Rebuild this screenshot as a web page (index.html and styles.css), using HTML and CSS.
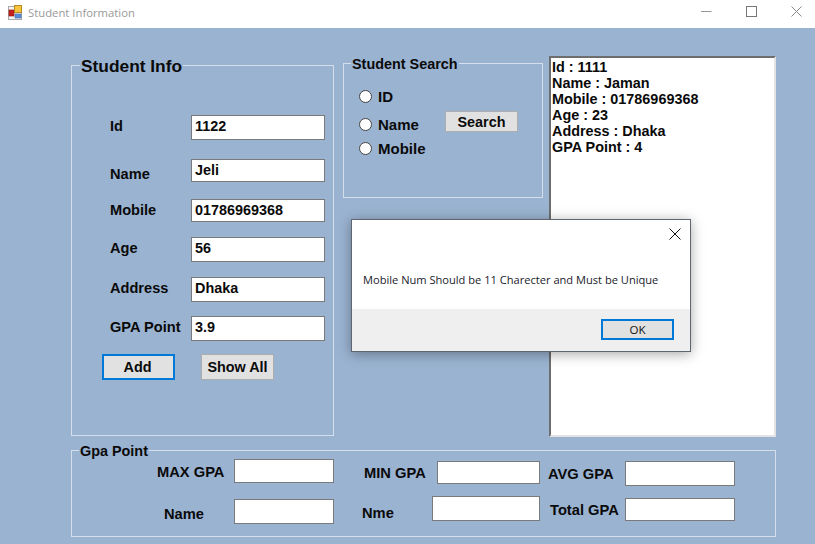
FILE: index.html
```html
<!DOCTYPE html>
<html lang="en">
<head>
    <meta charset="UTF-8">
    <title>Student Information</title>
    <link rel="stylesheet" href="styles.css">
</head>
<body>
    <!-- Title bar -->
    <div class="titlebar">
        <svg class="app-icon" width="15" height="15" viewBox="0 0 15 15">
            <rect x="0.5" y="1.5" width="13" height="13" fill="#f4f4f4" stroke="#a8a8a8"/>
            <rect x="1" y="5" width="5" height="6" fill="#c8201c" stroke="#8a1512" stroke-width="0.6"/>
            <rect x="6.5" y="0.5" width="7" height="7" fill="#f6c33c" stroke="#b78a22"/>
            <rect x="7" y="9" width="6" height="4" fill="#5a8fd8" stroke="#3f6db0" stroke-width="0.6"/>
        </svg>
        <span class="title-text">Student Information</span>
        <div class="window-btns">
            <svg width="11" height="11" viewBox="0 0 11 11"><path d="M0 5.5H10.5" stroke="#999" fill="none"/></svg>
            <svg width="11" height="11" viewBox="0 0 11 11"><rect x="0.5" y="0.5" width="10" height="10" stroke="#777" fill="none"/></svg>
            <svg width="11" height="11" viewBox="0 0 11 11"><path d="M0.5 0.5L10.5 10.5M10.5 0.5L0.5 10.5" stroke="#888" fill="none"/></svg>
        </div>
    </div>

    <!-- Form -->
    <div class="form">
        <div class="top-row">
            <fieldset class="group group-info">
                <legend class="legend-big">Student Info</legend>
                <div class="field field-id"><label>Id</label><input type="text" value="1122"></div>
                <div class="field field-name"><label class="label-low">Name</label><input type="text" value="Jeli"></div>
                <div class="field field-mobile"><label>Mobile</label><input type="text" value="01786969368"></div>
                <div class="field field-age"><label>Age</label><input type="text" value="56"></div>
                <div class="field field-address"><label>Address</label><input type="text" value="Dhaka"></div>
                <div class="field field-gpa"><label>GPA Point</label><input type="text" value="3.9"></div>
                <div class="btn-row">
                    <button class="btn btn-focus">Add</button>
                    <button class="btn">Show All</button>
                </div>
            </fieldset>

            <fieldset class="group group-search">
                <legend>Student Search</legend>
                <div class="search-body">
                    <div class="radios">
                        <label class="radio radio-id"><input type="radio" name="by">ID</label>
                        <label class="radio radio-name"><input type="radio" name="by">Name</label>
                        <label class="radio radio-mobile"><input type="radio" name="by">Mobile</label>
                    </div>
                    <button class="btn btn-search">Search</button>
                </div>
            </fieldset>

            <div class="output">
                <div>Id : 1111</div>
                <div>Name : Jaman</div>
                <div>Mobile : 01786969368</div>
                <div>Age : 23</div>
                <div>Address : Dhaka</div>
                <div>GPA Point : 4</div>
            </div>
        </div>

        <fieldset class="group group-gpa">
            <legend>Gpa Point</legend>
            <div class="gpa-cols">
                <div class="gpa-col col-max">
                    <div class="gpa-item item-max"><label>MAX GPA</label><input type="text"></div>
                    <div class="gpa-item item-name"><label>Name</label><input type="text"></div>
                </div>
                <div class="gpa-col col-min">
                    <div class="gpa-item item-min"><label>MIN GPA</label><input type="text"></div>
                    <div class="gpa-item item-nme"><label>Nme</label><input type="text"></div>
                </div>
                <div class="gpa-col col-avg">
                    <div class="gpa-item item-avg"><label>AVG GPA</label><input type="text"></div>
                    <div class="gpa-item item-total"><label>Total GPA</label><input type="text"></div>
                </div>
            </div>
        </fieldset>
    </div>

    <!-- Message box -->
    <div class="dialog">
        <div class="dialog-body">
            <svg class="dialog-close" width="12" height="12" viewBox="0 0 12 12"><path d="M0.5 0.5L11.5 11.5M11.5 0.5L0.5 11.5" stroke="#111" fill="none"/></svg>
            <p>Mobile Num Should be 11 Charecter and Must be Unique</p>
        </div>
        <div class="dialog-footer">
            <button class="btn-ok">OK</button>
        </div>
    </div>
</body>
</html>
```

FILE: styles.css
```css
/* General Reset */
* {
    margin: 0;
    padding: 0;
    box-sizing: border-box;
}

body {
    width: 815px;
    height: 544px;
    overflow: hidden;
    position: relative;
    font-family: "Liberation Sans", Arial, sans-serif;
    font-size: 14.4px;
    font-weight: bold;
    color: #0a0a0a;
    background-color: #9ab3d1;
}

/* Title bar */
.titlebar {
    height: 28px;
    background-color: white;
    display: flex;
    align-items: center;
    padding-left: 8px;
    font-family: "Open Sans", sans-serif;
    font-weight: normal;
}

.app-icon {
    margin-top: -3px;
}

.title-text {
    margin-left: 5px;
    margin-top: -3px;
    font-size: 11.3px;
    color: #999;
}

.window-btns {
    margin-left: auto;
    margin-top: -6px;
    padding-right: 13px;
    display: flex;
    gap: 34px;
}

/* Form */
.form {
    padding: 28px 0 0 71px;
}

.top-row {
    display: flex;
    align-items: flex-start;
}

input[type="text"] {
    background-color: white;
    border: 1px solid #7a7a7a;
    padding: 0 2px 3px 3px;
    font: inherit;
    color: inherit;
    outline: none;
    border-radius: 0;
}

/* Group boxes */
.group {
    border: 1px solid #d5dfeb;
    margin-top: -2px;
    min-width: 0;
}

.group legend {
    line-height: 16px;
    margin-left: 7px;
    padding: 2px 1px 0;
}

.group .legend-big {
    font-size: 17.33px;
    line-height: 20px;
    margin-left: 8px;
}

.group-info {
    width: 263px;
    height: 382px;
}

.group-search {
    width: 200px;
    height: 144px;
    margin-left: 9px;
}

/* Student Info rows */
.field {
    display: flex;
    align-items: center;
    height: 25px;
    margin-left: 38px;
}

.field label {
    width: 81px;
    margin-bottom: 4px;
    font-size: 14.6px;
}

.field input {
    width: 134px;
    height: 100%;
}

.field-id { margin-top: 39px; }
.field-name { margin-top: 19px; height: 23px; }
.field-mobile { margin-top: 17px; height: 23px; }
.field-age { margin-top: 15px; }
.field-address { margin-top: 15px; }
.field-gpa { margin-top: 14px; }

.field-name input,
.field-mobile input {
    padding-bottom: 1px;
}

.field-mobile label {
    margin-bottom: 2px;
}

.field .label-low {
    margin-top: 6px;
    margin-bottom: 0;
}

.btn-row {
    display: flex;
    gap: 26px;
    margin: 13px 0 0 30px;
}

.btn {
    width: 73px;
    height: 26px;
    font: inherit;
    color: inherit;
    background-color: #e1e1e1;
    border: 1px solid #adadad;
}

.btn-focus {
    border: 2px solid #0078d7;
    padding-right: 2px;
}

/* Student Search */
.search-body {
    display: flex;
}

.radios {
    padding-left: 15px;
    width: 101px;
}

.radio {
    display: flex;
    align-items: center;
    gap: 5px;
    height: 16px;
    font-size: 15px;
}

.radio input {
    appearance: none;
    width: 13px;
    height: 13px;
    margin-right: 1px;
    border: 1px solid #444;
    border-radius: 50%;
    background-color: white;
}

.radio-id { margin-top: 16px; }
.radio-name { margin-top: 12px; }
.radio-mobile { margin-top: 8px; }

.btn-search {
    height: 21px;
    margin-top: 39px;
}

/* Output box */
.output {
    width: 227px;
    height: 381px;
    margin-left: 6px;
    padding: 1px 0 0 1px;
    line-height: 16px;
    background-color: white;
    border: 2px solid #e3e3e3;
    border-top-color: #6d6d6d;
    border-left-color: #6d6d6d;
}

/* Gpa Point */
.group-gpa {
    width: 705px;
    height: 96px;
    margin-top: 4px;
}

.gpa-cols {
    display: flex;
}

.gpa-col {
    display: flex;
    flex-direction: column;
    flex-shrink: 0;
}

.gpa-item {
    display: flex;
    align-items: center;
}

.col-max { margin-left: 85px; width: 179px; }
.col-min { margin-left: 28px; width: 0; }
.col-avg { margin-left: 184px; }

.gpa-item input { height: 24px; flex-shrink: 0; }
.gpa-item label { white-space: nowrap; flex-shrink: 0; font-size: 14.7px; }

.item-max label { width: 77px; margin-top: 2px; }
.item-max input { width: 100px; }

.item-name { margin-top: 16px; padding-left: 7px; }
.item-name label { width: 70px; margin-top: 4px; }
.item-name input { width: 100px; height: 25px; }

.item-min { margin-top: 2px; }
.item-min label { width: 73px; }
.item-min input { width: 103px; height: 23px; }

.item-nme { margin-top: 12px; margin-left: -2px; }
.item-nme label { width: 70px; margin-top: 9px; }
.item-nme input { width: 108px; height: 25px; }

.item-avg { margin-top: 2px; }
.item-avg label { width: 77px; }
.item-avg input { width: 110px; height: 25px; }

.item-total { margin-top: 12px; padding-left: 2px; }
.item-total label { width: 75px; }
.item-total input { width: 110px; height: 23px; }

/* Message box */
.dialog {
    position: absolute;
    left: 351px;
    top: 219px;
    width: 340px;
    height: 133px;
    display: flex;
    flex-direction: column;
    background-color: white;
    border: 1px solid #5f6670;
    box-shadow: 0 2px 12px rgba(0, 0, 0, 0.35);
    font-family: "Open Sans", sans-serif;
    font-weight: normal;
}

.dialog-body {
    flex: 1;
    position: relative;
    padding: 52px 0 0 11px;
    font-size: 11.1px;
    line-height: 16px;
    color: #1a1a2a;
}

.dialog-close {
    position: absolute;
    top: 8px;
    right: 9px;
}

.dialog-footer {
    height: 42px;
    background-color: #efefef;
    display: flex;
    justify-content: flex-end;
    padding: 10px 16px 0 0;
}

.btn-ok {
    width: 73px;
    height: 21px;
    background-color: #e1e1e1;
    border: 2px solid #0078d7;
    font-family: "Open Sans", sans-serif;
    font-size: 11.5px;
    color: #111;
}
```
